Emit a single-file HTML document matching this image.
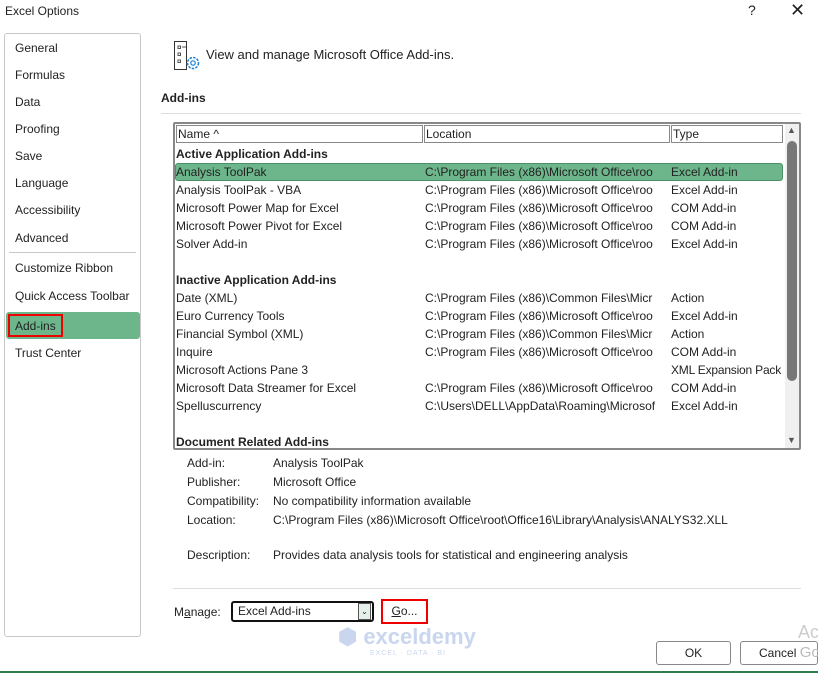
<!DOCTYPE html>
<html><head><style>
*{margin:0;padding:0;box-sizing:border-box}
body{width:818px;height:674px;background:#fff;font-family:"Liberation Sans",sans-serif;font-size:12px;color:#222;position:relative;overflow:hidden}
.a{position:absolute;white-space:nowrap}
.nav{left:15px}
.r{position:absolute;height:18px;line-height:18px;white-space:nowrap}
</style></head><body>
<div class="a" style="left:5px;top:4px">Excel Options</div>
<div class="a" style="left:748px;top:2px;font-size:14px">?</div>
<div class="a" style="left:790px;top:0px;font-size:18px">✕</div>

<div class="a" style="left:4px;top:33px;width:137px;height:604px;border:1px solid #c8c8c8;border-radius:3px"></div>
<div class="a nav" style="top:41px">General</div>
<div class="a nav" style="top:68px">Formulas</div>
<div class="a nav" style="top:95px">Data</div>
<div class="a nav" style="top:122px">Proofing</div>
<div class="a nav" style="top:149px">Save</div>
<div class="a nav" style="top:176px">Language</div>
<div class="a nav" style="top:203px">Accessibility</div>
<div class="a nav" style="top:231px">Advanced</div>
<div class="a" style="left:9px;top:252px;width:127px;height:1px;background:#c8c8c8"></div>
<div class="a nav" style="top:261px">Customize Ribbon</div>
<div class="a nav" style="top:289px">Quick Access Toolbar</div>
<div class="a" style="left:6px;top:312px;width:134px;height:27px;background:#6db58b;border-radius:3px"></div>
<div class="a" style="left:8px;top:314px;width:55px;height:23px;border:2px solid #e00"></div>
<div class="a nav" style="top:319px">Add-ins</div>
<div class="a nav" style="top:346px">Trust Center</div>

<svg class="a" style="left:173px;top:40px" width="30" height="32" viewBox="0 0 30 32"><path d="M1.5 1.5h12v28h-12z" fill="none" stroke="#333"/><rect x="5" y="6" width="2.5" height="2.5" fill="none" stroke="#555"/><path d="M9 7h4" stroke="#555"/><rect x="5" y="13" width="2.5" height="2.5" fill="none" stroke="#555"/><rect x="5" y="20" width="2.5" height="2.5" fill="none" stroke="#555"/><circle cx="20" cy="23" r="5.5" fill="#fff" stroke="#1a7fd1" stroke-width="1.5" stroke-dasharray="2.5 1.2"/><circle cx="20" cy="23" r="2.2" fill="none" stroke="#1a7fd1" stroke-width="1.2"/></svg>
<div class="a" style="left:206px;top:47px;font-size:13px">View and manage Microsoft Office Add-ins.</div>
<div class="a" style="left:161px;top:91px;font-weight:bold">Add-ins</div>
<div class="a" style="left:161px;top:113px;width:640px;height:1px;background:#ddd"></div>

<div class="a" style="left:173px;top:122px;width:628px;height:328px;border:2px solid #888;border-radius:2px"></div>
<div class="a" style="left:176px;top:125px;width:247px;height:18px;border:1px solid #888;padding-left:1px;line-height:16px">Name ^</div>
<div class="a" style="left:424px;top:125px;width:246px;height:18px;border:1px solid #888;padding-left:1px;line-height:16px">Location</div>
<div class="a" style="left:671px;top:125px;width:112px;height:18px;border:1px solid #888;padding-left:1px;line-height:16px">Type</div>
<div class="a" style="left:175px;top:163px;width:608px;height:18px;background:#6db58b;border:1px solid #4a8f66;border-radius:3px"></div>

<div style="position:absolute;left:0;top:1px">
<div class="r" style="left:176px;top:144px;font-weight:bold">Active Application Add-ins</div>
<div class="r" style="left:176px;top:162px">Analysis ToolPak</div><div class="r" style="left:425px;top:162px">C:\Program Files (x86)\Microsoft Office\roo</div><div class="r" style="left:671px;top:162px">Excel Add-in</div>
<div class="r" style="left:176px;top:180px">Analysis ToolPak - VBA</div><div class="r" style="left:425px;top:180px">C:\Program Files (x86)\Microsoft Office\roo</div><div class="r" style="left:671px;top:180px">Excel Add-in</div>
<div class="r" style="left:176px;top:198px">Microsoft Power Map for Excel</div><div class="r" style="left:425px;top:198px">C:\Program Files (x86)\Microsoft Office\roo</div><div class="r" style="left:671px;top:198px">COM Add-in</div>
<div class="r" style="left:176px;top:216px">Microsoft Power Pivot for Excel</div><div class="r" style="left:425px;top:216px">C:\Program Files (x86)\Microsoft Office\roo</div><div class="r" style="left:671px;top:216px">COM Add-in</div>
<div class="r" style="left:176px;top:234px">Solver Add-in</div><div class="r" style="left:425px;top:234px">C:\Program Files (x86)\Microsoft Office\roo</div><div class="r" style="left:671px;top:234px">Excel Add-in</div>
<div class="r" style="left:176px;top:270px;font-weight:bold">Inactive Application Add-ins</div>
<div class="r" style="left:176px;top:288px">Date (XML)</div><div class="r" style="left:425px;top:288px">C:\Program Files (x86)\Common Files\Micr</div><div class="r" style="left:671px;top:288px">Action</div>
<div class="r" style="left:176px;top:306px">Euro Currency Tools</div><div class="r" style="left:425px;top:306px">C:\Program Files (x86)\Microsoft Office\roo</div><div class="r" style="left:671px;top:306px">Excel Add-in</div>
<div class="r" style="left:176px;top:324px">Financial Symbol (XML)</div><div class="r" style="left:425px;top:324px">C:\Program Files (x86)\Common Files\Micr</div><div class="r" style="left:671px;top:324px">Action</div>
<div class="r" style="left:176px;top:342px">Inquire</div><div class="r" style="left:425px;top:342px">C:\Program Files (x86)\Microsoft Office\roo</div><div class="r" style="left:671px;top:342px">COM Add-in</div>
<div class="r" style="left:176px;top:360px">Microsoft Actions Pane 3</div><div class="r" style="left:671px;top:360px;letter-spacing:-0.2px">XML Expansion Pack</div>
<div class="r" style="left:176px;top:378px">Microsoft Data Streamer for Excel</div><div class="r" style="left:425px;top:378px">C:\Program Files (x86)\Microsoft Office\roo</div><div class="r" style="left:671px;top:378px">COM Add-in</div>
<div class="r" style="left:176px;top:396px">Spelluscurrency</div><div class="r" style="left:425px;top:396px">C:\Users\DELL\AppData\Roaming\Microsof</div><div class="r" style="left:671px;top:396px">Excel Add-in</div>
<div class="r" style="left:176px;top:432px;font-weight:bold">Document Related Add-ins</div>
</div>
<div class="a" style="left:785px;top:124px;width:14px;height:324px;background:#f0f0f0"></div>
<div class="a" style="left:787px;top:141px;width:10px;height:240px;background:#777;border-radius:5px"></div>
<div class="a" style="left:787px;top:125px;font-size:9px;color:#555">▲</div>
<div class="a" style="left:787px;top:435px;font-size:9px;color:#555">▼</div>

<div class="a" style="left:187px;top:456px">Add-in:</div><div class="a" style="left:273px;top:456px">Analysis ToolPak</div>
<div class="a" style="left:187px;top:475px">Publisher:</div><div class="a" style="left:273px;top:475px">Microsoft Office</div>
<div class="a" style="left:187px;top:494px">Compatibility:</div><div class="a" style="left:273px;top:494px">No compatibility information available</div>
<div class="a" style="left:187px;top:513px">Location:</div><div class="a" style="left:273px;top:513px">C:\Program Files (x86)\Microsoft Office\root\Office16\Library\Analysis\ANALYS32.XLL</div>
<div class="a" style="left:187px;top:548px">Description:</div><div class="a" style="left:273px;top:548px">Provides data analysis tools for statistical and engineering analysis</div>

<div class="a" style="left:173px;top:588px;width:628px;height:1px;background:#ddd"></div>
<div class="a" style="left:174px;top:605px">M<u>a</u>nage:</div>
<div class="a" style="left:231px;top:601px;width:143px;height:21px;border:2px solid #111;border-radius:3px;padding-left:5px;line-height:17px">Excel Add-ins</div>
<div class="a" style="left:358px;top:603px;width:13px;height:17px;border:1px solid #555;background:#e6f0ea;font-size:8px;text-align:center;line-height:15px">⌄</div>
<div class="a" style="left:381px;top:599px;width:47px;height:25px;border:2px solid #e00;text-align:center;line-height:21px"><u>G</u>o...</div>
<div class="a" style="left:338px;top:624px;font-size:22px;font-weight:bold;color:#c9d6ee">⬢ exceldemy</div>
<div class="a" style="left:370px;top:650px;font-size:7px;color:#c9d6ee;letter-spacing:1px">EXCEL · DATA · BI</div>
<div class="a" style="left:798px;top:622px;font-size:18px;color:#ccc">Ac</div>
<div class="a" style="left:656px;top:641px;width:75px;height:24px;border:1px solid #888;border-radius:3px;text-align:center;line-height:22px">OK</div>
<div class="a" style="left:740px;top:641px;width:78px;height:24px;border:1px solid #888;border-radius:3px;padding-left:18px;line-height:22px">Cancel <span style="color:#bbb;font-size:15px">Go</span></div>
<div class="a" style="left:0;top:671px;width:818px;height:2px;background:#2e7d4f"></div>
</body></html>
